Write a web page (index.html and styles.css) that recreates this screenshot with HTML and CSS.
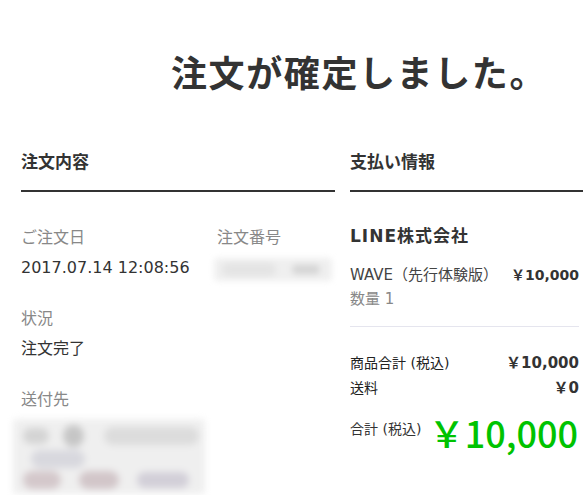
FILE: index.html
```html
<!DOCTYPE html>
<html lang="ja">
<head>
<meta charset="utf-8">
<title>注文が確定しました。</title>
<link rel="stylesheet" href="styles.css">
</head>
<body>
<div class="page">
  <h1 class="title">注文が確定しました。</h1>
  <div class="cols">
    <section class="col col-order">
      <h2 class="sec-head">注文内容</h2>
      <div class="order-grid">
        <div class="field">
          <div class="label">ご注文日</div>
          <div class="value">2017.07.14 12:08:56</div>
        </div>
        <div class="field">
          <div class="label">注文番号</div>
          <div class="value">
            <div class="blur blur-num">
              <span class="blob bn1"></span>
              <span class="blob bn2"></span>
            </div>
          </div>
        </div>
        <div class="field">
          <div class="label">状況</div>
          <div class="value">注文完了</div>
        </div>
        <div class="field field-addr">
          <div class="label">送付先</div>
          <div class="blur blur-addr">
            <div class="blob-row r1">
              <span class="blob a1"></span>
              <span class="blob a2"></span>
              <span class="blob a3"></span>
            </div>
            <div class="blob-row r2">
              <span class="blob a4"></span>
            </div>
            <div class="blob-row r3">
              <span class="blob a5"></span>
              <span class="blob a6"></span>
              <span class="blob a7"></span>
            </div>
          </div>
        </div>
      </div>
    </section>
    <section class="col col-pay">
      <h2 class="sec-head">支払い情報</h2>
      <div class="pay-body">
        <div class="shop">LINE株式会社</div>
        <div class="item-row">
          <span class="item-name">WAVE（先行体験版）</span>
          <span class="price">￥10,000</span>
        </div>
        <div class="qty">数量 1</div>
        <div class="divider"></div>
        <div class="sum-row">
          <span class="sum-label">商品合計 (税込)</span>
          <span class="price">￥10,000</span>
        </div>
        <div class="sum-row">
          <span class="sum-label">送料</span>
          <span class="price">￥0</span>
        </div>
        <div class="total-row">
          <span class="total-label">合計 (税込)</span>
          <span class="total-price">￥10,000</span>
        </div>
      </div>
    </section>
  </div>
</div>
</body>
</html>
```

FILE: styles.css
```css
html, body {
  margin: 0;
  padding: 0;
  background: #fff;
}

body {
  width: 583px;
  height: 495px;
  overflow: hidden;
  font-family: "DejaVu Sans", "Noto Sans CJK JP", sans-serif;
  color: #333;
}

.page {
  padding-left: 21px;
}

.title {
  margin: 0;
  padding: 53px 0 0 150px;
  font-family: "Noto Sans CJK JP", sans-serif;
  font-size: 36px;
  line-height: 36px;
  font-weight: 700;
  letter-spacing: 1.6px;
  color: #333;
  white-space: nowrap;
}

.cols {
  display: flex;
  gap: 15px;
  margin-top: 64px;
}

.col-order {
  width: 314px;
  flex: none;
}

.col-pay {
  width: 260px;
  flex: none;
}

.sec-head {
  margin: 0;
  padding-bottom: 21px;
  border-bottom: 2px solid #333;
  font-family: "Noto Sans CJK JP", sans-serif;
  font-size: 17px;
  line-height: 16px;
  font-weight: 700;
  color: #333;
}

/* ---- order details ---- */
.order-grid {
  display: grid;
  grid-template-columns: 196px 1fr;
  margin-top: 31px;
}

.field {
  margin-bottom: 21px;
}

.field-addr {
  grid-column: 1 / 3;
  margin-bottom: 0;
}

.label {
  font-size: 16px;
  line-height: 30px;
  color: #888;
}

.value {
  font-size: 16px;
  line-height: 30px;
  color: #333;
}

.blur {
  filter: blur(3px);
  background: #efefef;
  border-radius: 4px;
}

.blob {
  display: block;
  border-radius: 12px;
}

.blur-num {
  margin: 5px 0 0 -3px;
  width: 118px;
  height: 23px;
  display: flex;
  align-items: center;
  gap: 16px;
  padding-left: 8px;
  box-sizing: border-box;
}

.bn1 {
  width: 54px;
  height: 13px;
  background: #e4e4e4;
}

.bn2 {
  width: 28px;
  height: 9px;
  background: #d4d4d4;
}

.blur-addr {
  margin: 4px 0 0 -8px;
  width: 192px;
  height: 75px;
  padding: 6px 6px;
  box-sizing: border-box;
  display: flex;
  flex-direction: column;
  gap: 3px;
  filter: blur(3.5px);
}

.blob-row {
  display: flex;
  align-items: center;
  gap: 8px;
}

.r1 { height: 24px; }
.r2 { height: 18px; }
.r3 { height: 20px; }

.a1 { width: 26px; height: 16px; background: #d4d4d4; margin-left: 4px; }
.a2 { width: 22px; height: 22px; background: #c6c6c6; border-radius: 50%; margin-left: 6px; }
.a3 { width: 96px; height: 18px; background: #dcdcdc; margin-left: 12px; }
.a4 { width: 54px; height: 18px; background: #d8d8de; margin-left: 12px; }
.a5 { width: 38px; height: 18px; background: #d4c8cb; margin-left: 4px; }
.a6 { width: 40px; height: 18px; background: #d2c6c9; margin-left: 10px; }
.a7 { width: 52px; height: 16px; background: #d2cfd8; margin-left: 10px; }

/* ---- payment ---- */
.pay-body {
  width: 229px;
  margin-top: 29px;
}

.shop {
  font-size: 17px;
  line-height: 30px;
  font-weight: 700;
  letter-spacing: 1px;
  color: #333;
}

.item-row,
.sum-row {
  display: flex;
  justify-content: space-between;
  align-items: center;
}

.item-row {
  margin-top: 11px;
  line-height: 26px;
}

.item-name {
  font-size: 15px;
  color: #444;
}

.price {
  font-size: 14px;
  font-weight: 700;
  color: #333;
}

.qty {
  font-size: 15px;
  line-height: 22px;
  color: #888;
}

.divider {
  height: 1px;
  margin-top: 16px;
  background: #e5e5ee;
}

.sum-row {
  line-height: 25px;
}

.divider + .sum-row {
  margin-top: 24px;
}

.sum-label {
  font-size: 14px;
  color: #222;
}

.sum-row .price {
  font-size: 15px;
}

.total-row {
  display: flex;
  justify-content: space-between;
  align-items: center;
  margin-top: 11px;
}

.total-label {
  font-size: 14px;
  line-height: 20px;
  color: #333;
  margin-top: -6px;
}

.total-price {
  font-family: "Noto Sans CJK JP", sans-serif;
  font-size: 36px;
  line-height: 40px;
  font-weight: 500;
  color: #00c300;
  margin-right: 1px;
}
```
